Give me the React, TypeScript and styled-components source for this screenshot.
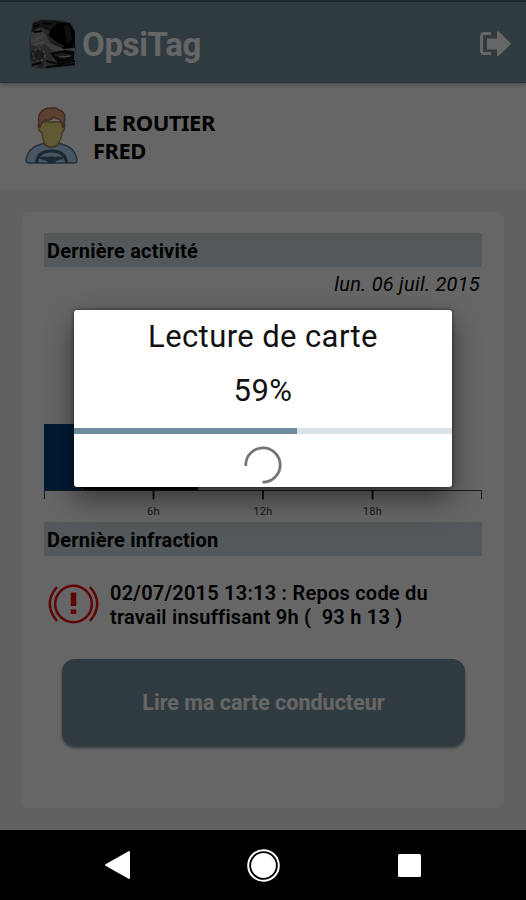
import React from "react";
import styled, { createGlobalStyle } from "styled-components";

const GlobalStyle = createGlobalStyle`
  *, *::before, *::after { box-sizing: border-box; }
  body { margin: 0; background: #000; font-family: Roboto, "Liberation Sans", sans-serif; }
`;

const Screen = styled.div`
  position: relative;
  width: 526px;
  height: 900px;
  display: flex;
  flex-direction: column;
  overflow: hidden;
`;

const AppArea = styled.div`
  height: 830px;
  display: flex;
  flex-direction: column;
  background: #f2f2f2;
`;

const Header = styled.header`
  flex: none;
  height: 83px;
  padding: 3px 13px 0 29px;
  display: flex;
  align-items: center;
  background: #7694a1;
  border-top: 2px solid #4d6570;
  border-bottom: 1px solid #668896;
  box-shadow: 0 1px 5px rgba(0, 0, 0, 0.4);
  z-index: 1;
`;

const AppName = styled.h1`
  flex: 1;
  margin: 2px 0 0 4px;
  font-size: 33px;
  line-height: 40px;
  font-weight: 700;
  letter-spacing: -0.35px;
  color: #fff;
`;

const UserPanel = styled.section`
  flex: none;
  height: 106px;
  padding: 24px 24px 0;
  display: flex;
  align-items: flex-start;
  gap: 15px;
  background: #fff;
`;

const UserName = styled.div`
  padding-top: 1px;
  font: 700 22px/28px "Noto Sans", sans-serif;
  letter-spacing: -0.5px;
  color: #000;
`;

const Card = styled.main`
  margin: 23px 22px 0;
  height: 596px;
  padding: 21px 22px 0;
  display: flex;
  flex-direction: column;
  border-radius: 7px;
  background: #fff;
`;

const SectionTitle = styled.h2`
  flex: none;
  margin: 0;
  height: 34px;
  padding-left: 3px;
  font-size: 20px;
  line-height: 36px;
  font-weight: 700;
  letter-spacing: 0.2px;
  color: #000;
  background: #d0dfe1;
`;

const ActivityDate = styled.div`
  height: 36px;
  padding-right: 2px;
  text-align: right;
  font-size: 20px;
  line-height: 35px;
  font-style: italic;
  letter-spacing: 0.25px;
  color: #000;
`;

const Timeline = styled.svg`
  flex: none;
  display: block;
  margin-top: 118px;
  width: 438px;
  height: 101px;
  font-family: Roboto, sans-serif;
  font-size: 11px;
  letter-spacing: 0.3px;
`;

const Infraction = styled.div`
  height: 103px;
  padding: 27px 0 0 4px;
  display: flex;
  gap: 10px;
`;

const InfractionText = styled.p`
  margin: -2px 0 0;
  font-size: 20px;
  line-height: 24px;
  font-weight: 600;
  letter-spacing: 0.23px;
  white-space: pre;
  color: #000;
`;

const ReadButton = styled.button`
  flex: none;
  margin: 0 17px 0 18px;
  height: 87px;
  border: 0;
  border-radius: 13px;
  background: #7694a1;
  box-shadow: 0 2px 3px rgba(0, 30, 45, 0.5);
  font: 700 21.5px Roboto, sans-serif;
  color: #fff;
`;

const Scrim = styled.div`
  position: absolute;
  inset: 0 0 70px;
  z-index: 2;
  background: rgba(0, 0, 0, 0.6);
  padding: 310px 74px 0;
`;

const Dialog = styled.div`
  height: 177px;
  display: flex;
  flex-direction: column;
  align-items: center;
  border-radius: 3px;
  background: #fff;
  box-shadow: 0 12px 28px rgba(0, 0, 0, 0.48), 0 0 4px rgba(0, 0, 0, 0.55);
`;

const DialogLine = styled.div<{ $height: number }>`
  height: ${(p) => p.$height}px;
  line-height: 54px;
  font-size: 31px;
  letter-spacing: 0.4px;
  color: #111;
`;

const Track = styled.div`
  width: 100%;
  height: 6px;
  margin-bottom: 12px;
  background: #dae3e6;
`;

const Fill = styled.div`
  height: 100%;
  background: #6e8d9c;
`;

const NavBar = styled.nav`
  height: 70px;
  display: flex;
  justify-content: center;
  align-items: center;
  gap: 111px;
  background: #000;
`;

const TruckLogo = () => (
  <svg width="49" height="50" viewBox="0 0 49 50">
    <path d="M4 3 12 0l24 1 8 6 3 22-2 12 1 6-24 2-8 2-12-3-2-24z" fill="#67696c" />
    <path d="M4 4 14 1l15 1 8 4-13 8-12-6-10 8z" fill="#303336" />
    <path d="m22 10 8-7 11 1 5 9v15l-9 3-11-6-9-3z" fill="#030405" />
    <path d="m35 7 5-1 3 15-5 4z" fill="#24272c" />
    <path d="m3 18 9-6 8 8 14 10 12-1-1 5-21-2-8-7-13 2z" fill="#94979a" />
    <path d="m2 14 8-5 7 7 2 8-9 4-8-2z" fill="#8b8e91" />
    <path d="m17 14 9 8 9 5-3 2-11-5z" fill="#4b4f54" />
    <path d="m21 34 15-3 9 1v9l-16 3z" fill="#111315" />
    <path d="m24 36 9-2 10 2-7 4z" fill="#44484d" />
    <path d="M1 34q4-6 11-4 5 5 3 13l-2 7q-5-3-5-6L1 40z" fill="#45484b" />
    <circle cx="10" cy="36" r="6" fill="none" stroke="#9b9ea0" strokeWidth="1.6" strokeDasharray="3 1.5" />
    <path d="m17 42 12 3 17-3M3 46l9-2M17 48l29-3M4 8l7-2m-6 7 8-1m1-8 9 1" fill="none" stroke="#0c0d0f" strokeWidth="2" />
    <path d="m4 22 10-5m-9 9 9-3m16 15 12-1" fill="none" stroke="#b0b4b7" strokeWidth="1.2" />
  </svg>
);

const LogoutIcon = () => (
  <svg width="34" height="28" viewBox="0 0 34 28">
    <path d="M12 3.500H5.500Q2.500 3.500 2.500 6.500v14q0 3 3 3H12" fill="none" stroke="#fff" strokeWidth="3" />
    <path d="M8 8.500h10V2.200q.2-1.600 1.600-.7l11.800 11.200q1 1 0 2L19.600 26q-1.400 1-1.600-.7V19.500H8z" fill="#fff" />
  </svg>
);

const DriverIcon = () => (
  <svg width="54" height="58" viewBox="0 0 54 58">
    <path d="M2 53Q4 40 18 37l4-2h11l4 2q14 3 16 16 0 3-3 3H5q-3 0-3-3z" fill="#b5d5f5" stroke="#58799a" strokeWidth="1.400" />
    <path d="M20 34v4q7 5 15 0v-4z" fill="#e9d877" stroke="#a98c50" />
    <path d="M16 15q-3 2-1 8l3 3q1 14 9.500 14T38 26l2-3q2-6-1-8z" fill="#ede081" stroke="#a98c50" strokeWidth="1.400" />
    <path d="M16 21C12 9 16 1 27 1q5-1 8 2 6 1 6 9l-2 9q-1-6-4-9-3 0-5-2-4 4-9 3-4 2-5 8z" fill="#e7a17e" stroke="#a46b55" strokeWidth="1.400" />
    <path d="M12.500 56q1-12 15-12t15 12" fill="none" stroke="#45627a" strokeWidth="3.200" />
    <path d="M15 50q6-1 9 0 3-1.500 7 0 4-1 9 0l-1 2-7 2-1 2.500h-7L23 54l-7-2z" fill="#45627a" />
  </svg>
);

const WarningIcon = () => (
  <svg width="52" height="42" viewBox="0 0 52 42" fill="none" stroke="#f00a0a" strokeWidth="2.500">
    <circle cx="25.500" cy="21" r="18.300" />
    <path d="M9 4q-14.500 16.500 0 34M42 4q14.500 16.500 0 34" />
    <path d="M25.500 9.500v13.500M25.500 26.500v4.500" strokeWidth="5.500" />
  </svg>
);

const ticks = [
  { x: 109.5, label: "6h" },
  { x: 219, label: "12h" },
  { x: 328.5, label: "18h" },
];

const progress = 59;

export default function App() {
  return (
    <>
      <GlobalStyle />
      <Screen>
        <AppArea>
          <Header>
            <TruckLogo />
            <AppName>OpsiTag</AppName>
            <LogoutIcon />
          </Header>
          <UserPanel>
            <DriverIcon />
            <UserName>
              LE ROUTIER
              <br />
              FRED
            </UserName>
          </UserPanel>
          <Card>
            <SectionTitle>Dernière activité</SectionTitle>
            <ActivityDate>lun. 06 juil. 2015</ActivityDate>
            <Timeline viewBox="0 0 438 101">
              <path d="M0 3h48v66H0z" fill="#004180" />
              <path d="M40 64h114v5H40z" fill="#000" />
              <path d="M.5 78V69.500h437V78" fill="none" stroke="#444" />
              {ticks.map((t) => (
                <g key={t.label}>
                  <path d={`M${t.x} 69v9.500`} stroke="#111" strokeWidth="1.800" />
                  <text x={t.x} y="94" textAnchor="middle" fill="#444">{t.label}</text>
                </g>
              ))}
            </Timeline>
            <SectionTitle>Dernière infraction</SectionTitle>
            <Infraction>
              <WarningIcon />
              <InfractionText>{"02/07/2015 13:13 : Repos code du\ntravail insuffisant 9h (  93 h 13 )"}</InfractionText>
            </Infraction>
            <ReadButton>Lire ma carte conducteur</ReadButton>
          </Card>
        </AppArea>
        <NavBar>
          <svg width="35" height="34" viewBox="0 0 35 34">
            <path d="M29 4v26L6 17z" fill="#fff" stroke="#fff" strokeWidth="2" strokeLinejoin="round" />
          </svg>
          <svg width="35" height="34" viewBox="0 0 35 34">
            <circle cx="17.500" cy="17.500" r="15.300" fill="none" stroke="#fff" strokeWidth="2" />
            <circle cx="17.500" cy="17.500" r="12.400" fill="#fff" />
          </svg>
          <svg width="35" height="34" viewBox="0 0 35 34">
            <rect x="6" y="6" width="23" height="23" rx="1.500" fill="#fff" />
          </svg>
        </NavBar>
        <Scrim>
          <Dialog role="dialog">
            <DialogLine $height={54}>Lecture de carte</DialogLine>
            <DialogLine $height={64}>{progress}%</DialogLine>
            <Track>
              <Fill style={{ width: `${progress}%` }} />
            </Track>
            <svg width="38" height="38" viewBox="0 0 38 38">
              <path d="M1.800 20A17.200 17.200 0 1 1 18.500 36.200" fill="none" stroke="#747474" strokeWidth="2.800" />
            </svg>
          </Dialog>
        </Scrim>
      </Screen>
    </>
  );
}
